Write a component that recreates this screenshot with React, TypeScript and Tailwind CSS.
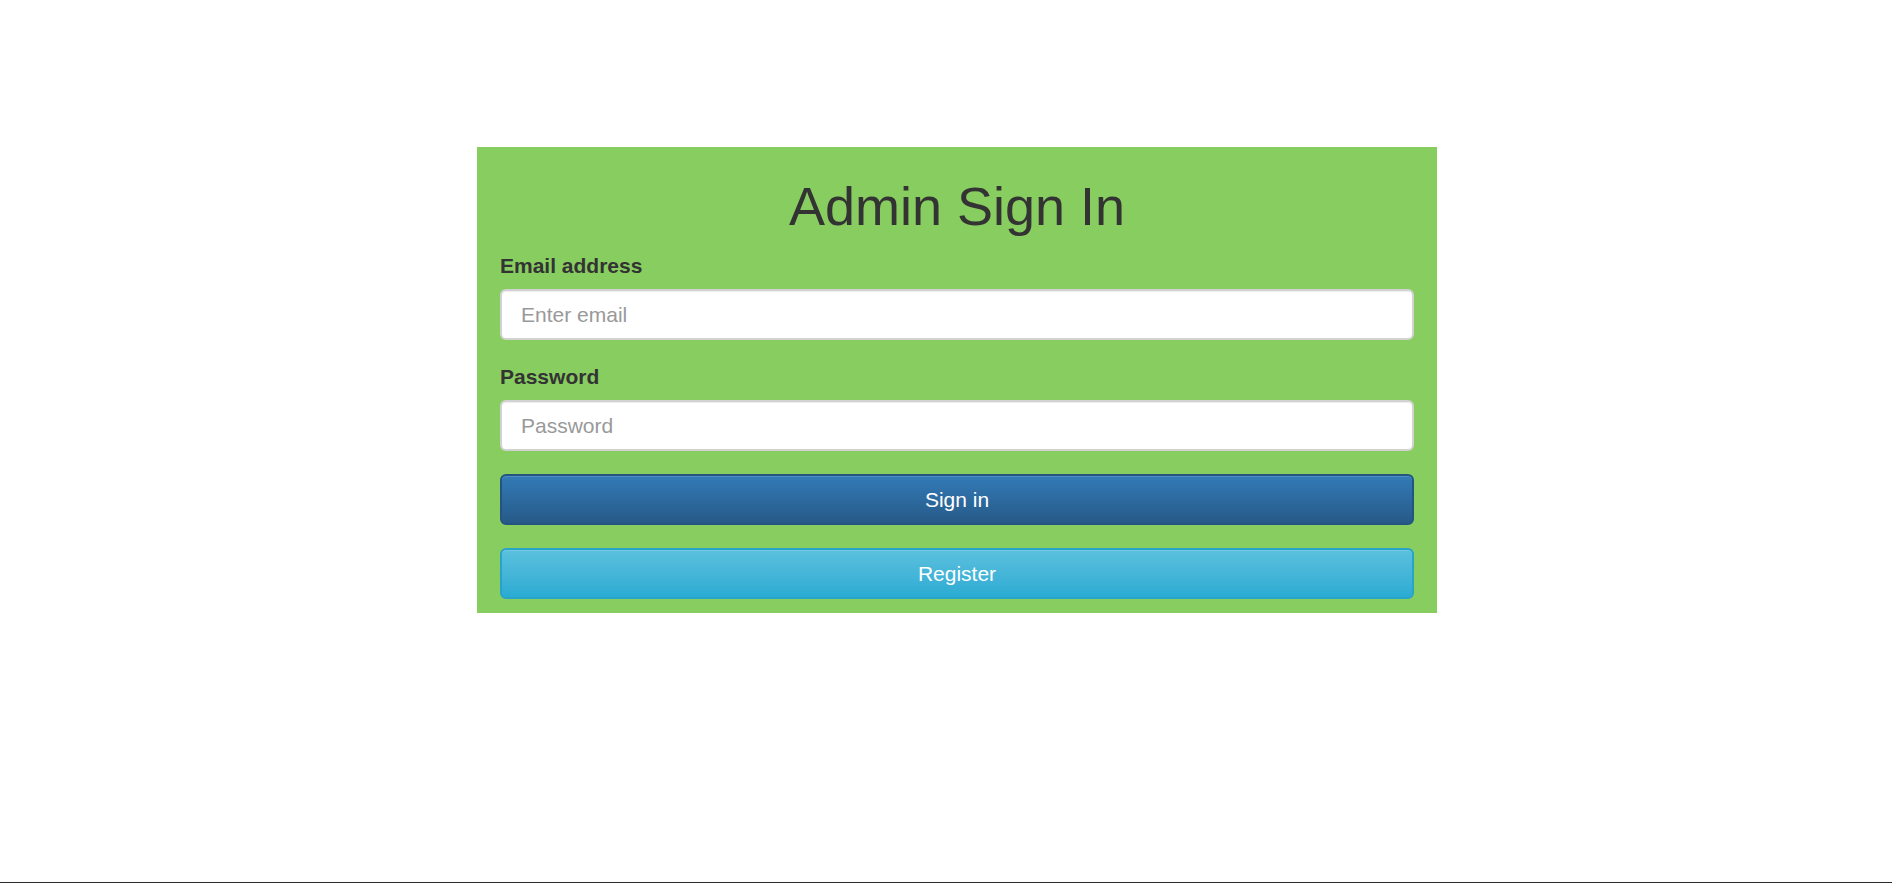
import React from "react";

const App = () => {
  return (
    <div
      className="h-screen flex flex-col bg-white text-[#333]"
      style={{ fontFamily: '"Liberation Sans", Arial, sans-serif' }}
    >
      <div className="flex-1">
        {/* Sign in panel */}
        <div className="ml-[477px] mt-[147px] w-[960px] bg-[#88cd60] px-[23px] pt-[30px] pb-[14px]">
          <h1 className="text-center text-[54px] leading-[59px] font-normal mb-[15px]">
            Admin Sign In
          </h1>

          <form className="flex flex-col" onSubmit={(e) => e.preventDefault()}>
            <label className="text-[21px] leading-[30px] font-bold mb-[8px]">
              Email address
            </label>
            <input
              type="email"
              placeholder="Enter email"
              className="h-[51px] w-full rounded-[6px] border-2 border-[#d2d2d2] bg-white px-[19px] text-[21px] text-[#555] placeholder-[#999] outline-none shadow-[inset_0_1px_1px_rgba(0,0,0,0.075)]"
            />

            <label className="mt-[22px] text-[21px] leading-[30px] font-bold mb-[8px]">
              Password
            </label>
            <input
              type="password"
              placeholder="Password"
              className="h-[51px] w-full rounded-[6px] border-2 border-[#d2d2d2] bg-white px-[19px] text-[21px] text-[#555] placeholder-[#999] outline-none shadow-[inset_0_1px_1px_rgba(0,0,0,0.075)]"
            />

            <button
              type="submit"
              className="mt-[23px] h-[51px] w-full rounded-[6px] border-2 border-[#245580] bg-gradient-to-b from-[#337ab7] to-[#265a88] text-[21px] text-white shadow-[inset_0_1px_0_rgba(255,255,255,0.15)]"
            >
              Sign in
            </button>

            <button
              type="button"
              className="mt-[23px] h-[51px] w-full rounded-[6px] border-2 border-[#28a4c9] bg-gradient-to-b from-[#5bc0de] to-[#2aabd2] text-[21px] text-white shadow-[inset_0_1px_0_rgba(255,255,255,0.15)]"
            >
              Register
            </button>
          </form>
        </div>
      </div>

      {/* bottom edge */}
      <div className="h-px bg-[#2a2a2a]" />
    </div>
  );
};

export default App;
